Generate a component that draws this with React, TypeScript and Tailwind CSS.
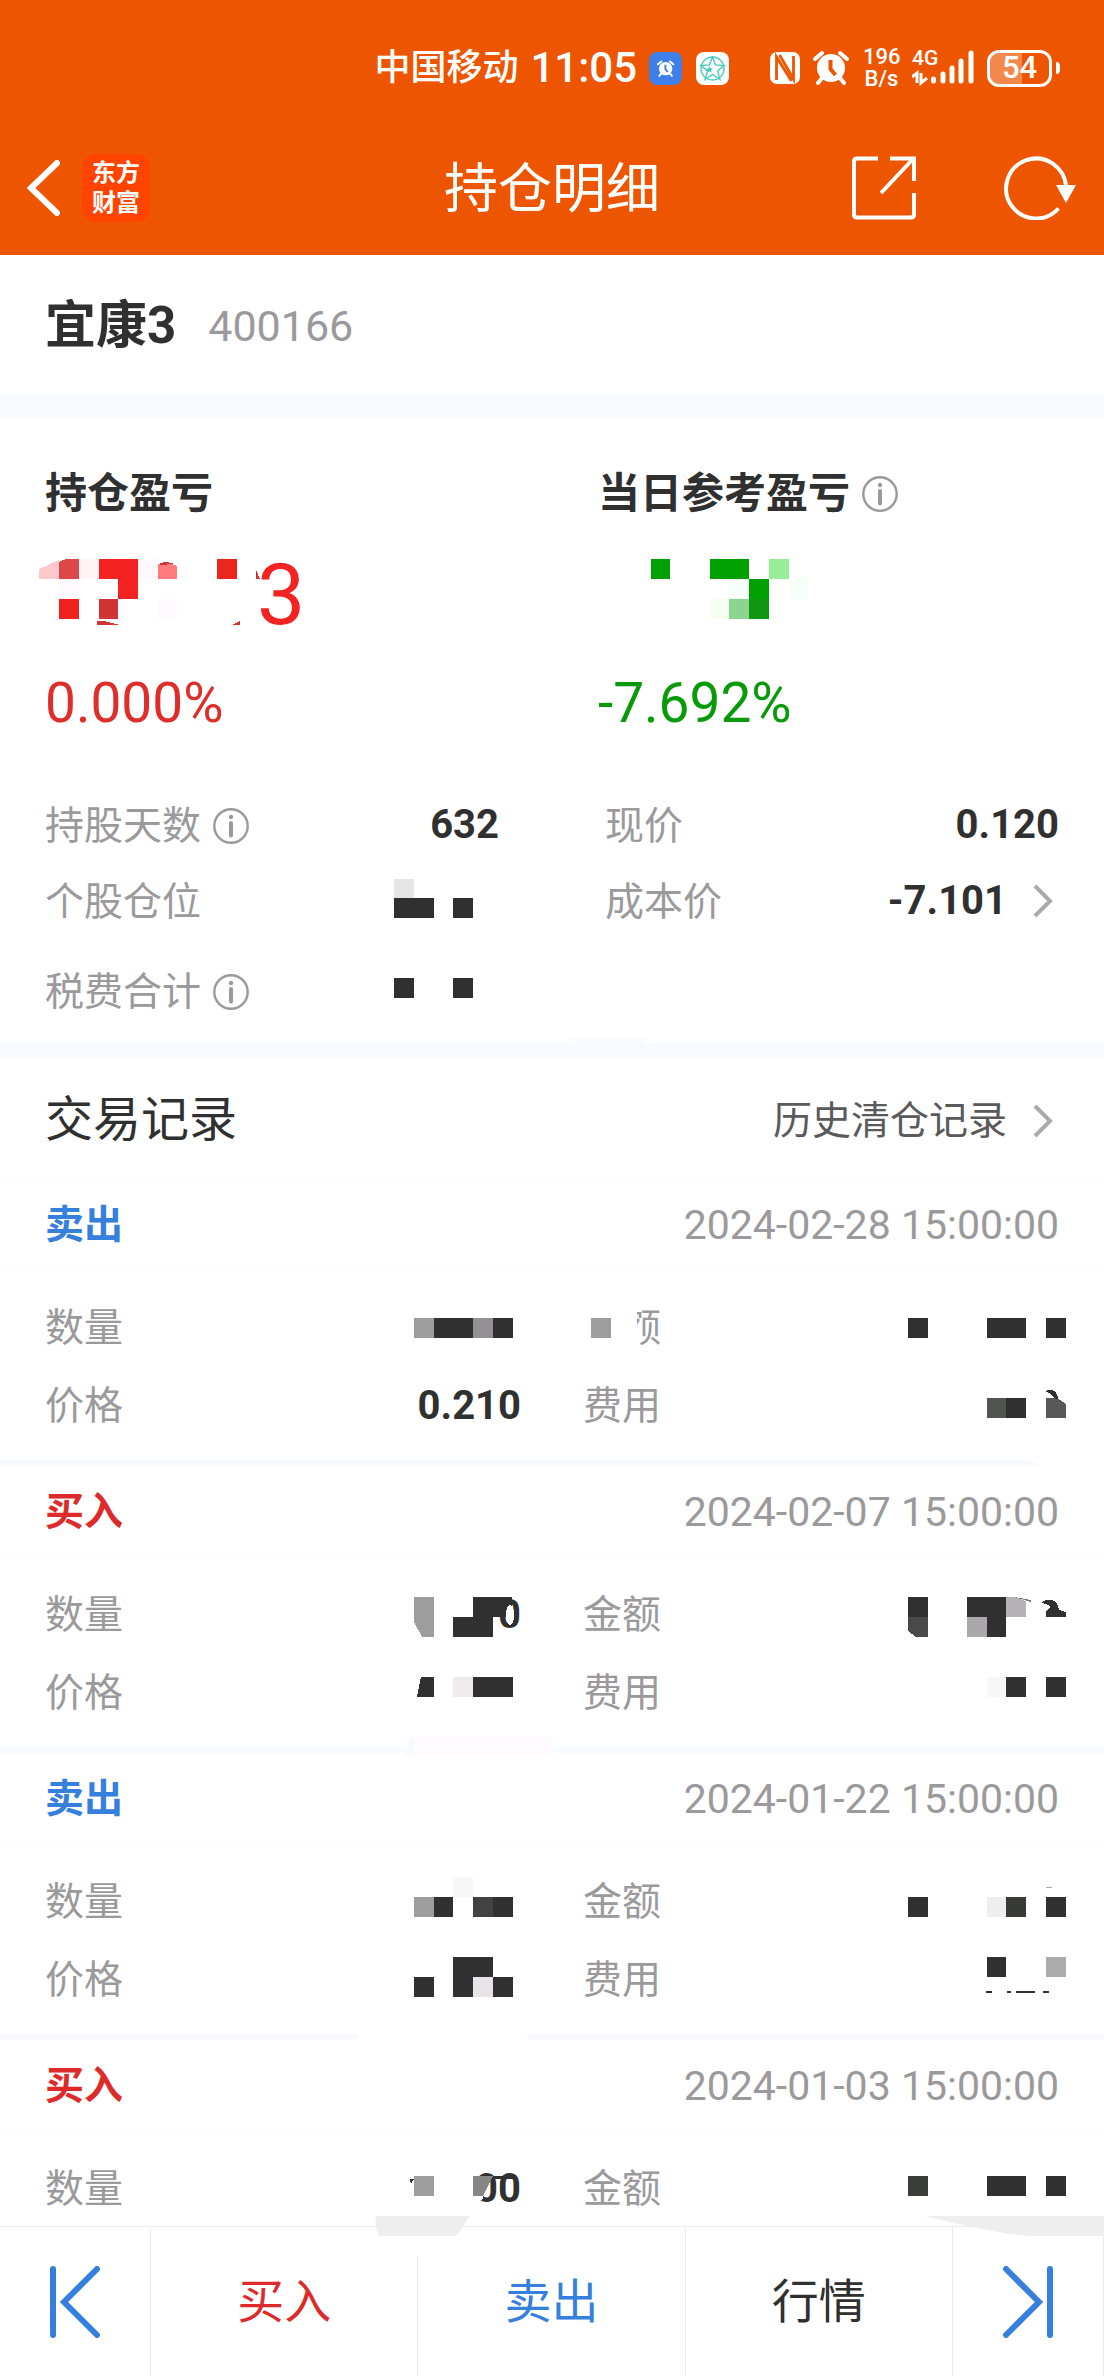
// src/pages/position/PositionDetail.tsx
import React from 'react';

// [x, y, largeur, hauteur, couleur]
type Cell = [number, number, number, number, string];

const DARK = '#303030';
const GREY = '#9c9d9c';

interface MosaicProps {
  cells?: Cell[];
  className?: string;
  children?: React.ReactNode;
}

// Mosaïque qui masque un montant
const Mosaic: React.FC<MosaicProps> = ({ cells = [], className = '', children }) => (
  <svg aria-hidden="true" shapeRendering="crispEdges" className={`overflow-visible ${className}`}>
    {cells.map(([x, y, w, h, color], i) => (
      <rect key={i} x={x} y={y} width={w} height={h} fill={color} />
    ))}
    {children}
  </svg>
);

const InfoIcon: React.FC = () => (
  <svg viewBox="0 0 36 36" className="h-9 w-9 shrink-0" fill="none" stroke="#9b999b" aria-hidden="true">
    <circle cx="18" cy="18" r="16.7" strokeWidth="2.4" />
    <circle cx="18" cy="9" r="2.2" fill="#9b999b" stroke="none" />
    <path d="M18 15v12.5" strokeWidth="4" strokeLinecap="round" />
  </svg>
);

const ChevronIcon: React.FC = () => (
  <svg viewBox="0 0 20 34" className="h-[34px] w-5 shrink-0" fill="none" stroke="#aaa9ac" strokeWidth="4" aria-hidden="true">
    <path d="M2 2l15 15L2 32" />
  </svg>
);

const AlarmShape: React.FC<{ hand: string }> = ({ hand }) => (
  <>
    <circle cx="18" cy="18" r="14" fill="#fff" />
    <path d="M2 9l7-6M34 9l-7-6M9 28l-4 5M27 28l4 5" stroke="#fff" strokeWidth="4" strokeLinecap="round" />
    <path d="M17.500 10v9l5 6" fill="none" stroke={hand} strokeWidth="4" />
  </>
);

const StatusBar: React.FC = () => (
  <div className="flex h-[136px] items-center justify-end pr-11 font-medium">
    <span className="text-[36px] leading-[48px]">中国移动</span>
    <span className="ml-3 text-[42px] leading-[48px]">11:05</span>
    <svg viewBox="0 0 33 33" className="ml-3 h-[33px] w-[33px]" aria-hidden="true">
      <rect width="33" height="33" rx="8" fill="#3f7fea" />
      <g transform="translate(8 8) scale(.48)">
        <AlarmShape hand="#3f7fea" />
      </g>
    </svg>
    <svg viewBox="0 0 33 33" className="ml-[14px] h-[33px] w-[33px]" fill="none" stroke="#3fc9bd" aria-hidden="true">
      <rect width="33" height="33" rx="8" fill="#fff" stroke="none" />
      <circle cx="16.500" cy="16.500" r="11.500" strokeWidth="1.300" />
      <path d="M16.500 5l3 8 8.500.5-6.500 5.500 2.500 8.500-7.500-5-7.500 5 2.500-8.500L5 13.500l8.500-.5z" strokeWidth="1.300" />
      <path d="M13.500 14l1 2.500h2.500l-2 1.700.8 2.500-2.300-1.500-2.300 1.500.8-2.500-2-1.700h2.500z" fill="#3fc9bd" stroke="none" />
    </svg>
    <svg viewBox="0 0 32 32" className="ml-10 h-8 w-8" fill="none" stroke="#ee5500" aria-hidden="true">
      <rect x="1" y="0" width="30" height="32" rx="7" fill="#fff" stroke="none" />
      <path d="M7.500 28V5l15 24M24.500 4v23L10.500 3" strokeWidth="2.800" />
    </svg>
    <svg viewBox="0 0 36 36" className="ml-3 h-9 w-9" aria-hidden="true">
      <AlarmShape hand="#ee5500" />
    </svg>
    <div className="ml-[14px] w-[37px] text-center text-[22px] leading-[22px]">
      <div>196</div>
      <div>B/s</div>
    </div>
    <div className="relative ml-3 h-9 w-[63px]">
      <span className="absolute -top-1 left-0 text-[21px] leading-[24px]">4G</span>
      <svg viewBox="0 0 63 36" className="h-9 w-[63px]" stroke="#fff" aria-hidden="true">
        <path d="M21.500 29v2M31 24v7M40 18v13M49 11v20M59 3v28" strokeWidth="5" strokeLinecap="round" />
        <path d="M0 27l5-4v10M9 23v10l6-5" fill="none" strokeWidth="3" />
      </svg>
    </div>
    <div className="relative ml-3 flex h-[37px] w-[65px] items-center justify-center overflow-hidden rounded-[12px] border-3 border-white">
      <div className="absolute inset-y-0 left-0 w-[54%] bg-white/30" />
      <span className="relative text-[31px] leading-[32px]">54</span>
    </div>
    <div className="ml-1 h-3 w-1 rounded-r-full bg-white" />
  </div>
);

const NavBar: React.FC = () => (
  <div className="grid h-[104px] grid-cols-[1fr_auto_1fr] items-center">
    <div className="flex items-center gap-[22px] pl-[26px]">
      <button type="button" aria-label="返回">
        <svg viewBox="0 0 34 56" className="h-14 w-[34px]" fill="none" stroke="#fff" strokeWidth="6">
          <path d="M31 3L5 28l26 25" strokeLinecap="round" />
        </svg>
      </button>
      <div className="flex h-[68px] w-[68px] items-center justify-center rounded-[14px] bg-[#ff4400] text-center text-[24px] leading-[30px] font-bold">
        东方
        <br />
        财富
      </div>
    </div>
    <h1 className="pt-1 text-[54px] leading-[64px]">持仓明细</h1>
    <div className="flex items-center justify-end gap-[88px] pr-[28px]">
      <button type="button" aria-label="分享">
        <svg viewBox="0 0 64 64" className="h-16 w-16" fill="none" stroke="#fff" strokeWidth="4">
          <path d="M26 2.500H5Q2 2.500 2 5.500v53q0 3 3 3h54q3 0 3-3V37" />
          <path d="M38 2.500h24V25M61 3L29 37" />
        </svg>
      </button>
      <button type="button" aria-label="刷新">
        <svg viewBox="0 0 72 64" className="h-16 w-[72px]" fill="none" stroke="#fff" strokeWidth="4">
          <path d="M54.500 52.500A30 30 0 1 1 62 30" />
          <path d="M52 29h20L62 47z" fill="#fff" stroke="none" />
        </svg>
      </button>
    </div>
  </div>
);

interface DetailRowProps {
  label: string;
  info?: boolean;
  children?: React.ReactNode;
}

const DetailRow: React.FC<DetailRowProps> = ({ label, info, children }) => (
  <div className="flex h-[76px] items-center justify-between">
    <dt className="flex items-center gap-3 pt-[2px] text-[39px] leading-[48px] text-[#9b999b]">
      {label}
      {info && <InfoIcon />}
    </dt>
    <dd className="flex h-full items-center text-[40px] leading-[50px] font-bold">{children}</dd>
  </div>
);

const PositionSummary: React.FC = () => (
  <section className="px-[45px] pt-[52px] pb-[14px]">
    <div className="-mx-[45px] grid grid-cols-2">
      <div className="pl-[45px]">
        <h2 className="text-[42px] leading-[48px] font-bold">持仓盈亏</h2>
        <div className="mt-[35px] flex h-[84px] items-center text-[86px] leading-[84px] text-[#f22321]">
          <Mosaic
            className="h-full w-[212px]"
            cells={[
              [34, 6, 20, 20, '#fff5f5'],
              [54, 6, 39, 20, '#f52223'],
              [73, 26, 20, 20, '#f52223'],
              [93, 6, 20, 20, '#fff9fe'],
              [14, 26, 20, 20, '#fffaff'],
              [14, 46, 20, 20, '#f0221e'],
              [54, 46, 19, 20, '#d03433'],
              [113, 46, 19, 20, '#fffaff'],
              [172, 6, 20, 20, '#ea261f'],
            ]}
          >
            <path d="M-6 16L14 7v19H-6z" fill="#fdc9cc" />
            <path d="M14 9l7-3h13v20H14z" fill="#dd4748" />
            <path d="M113 11q10-3 19 2v13h-19z" fill="#ff7b7d" />
            <path d="M115 10q8-2 14 1l-14 1z" fill="#d03433" />
            <path d="M52 68h7l16 4H52zM187 72l8-4v4zM211 17l4 9h-4z" fill="#d03433" />
          </Mosaic>
          3
        </div>
        <p className="mt-[34px] text-[55px] leading-[64px] text-[#df2d2a]">0.000%</p>
      </div>
      <div className="pl-[46px]">
        <h2 className="flex items-center gap-3 text-[42px] leading-[48px] font-bold">
          当日参考盈亏
          <InfoIcon />
        </h2>
        <div className="mt-[35px] h-[84px]">
          <Mosaic
            className="h-full w-[212px]"
            cells={[
              [53, 6, 19, 20, '#00a000'],
              [112, 6, 39, 20, '#00a000'],
              [171, 6, 20, 20, '#97ee99'],
              [131, 26, 20, 20, '#f7fffa'],
              [151, 26, 20, 20, '#00a000'],
              [191, 26, 19, 20, '#f6fffa'],
              [112, 46, 19, 20, '#f6ffef'],
              [131, 46, 20, 20, '#8bd58f'],
              [151, 46, 20, 20, '#109712'],
            ]}
          />
        </div>
        <p className="mt-[34px] text-[55px] leading-[64px] text-[#079b09]">-7.692%</p>
      </div>
    </div>

    <dl className="mt-[52px] grid grid-cols-2 gap-x-[106px]">
      <DetailRow label="持股天数" info>632</DetailRow>
      <DetailRow label="现价">0.120</DetailRow>
      <DetailRow label="个股仓位">
        <Mosaic
          className="h-full w-[160px]"
          cells={[
            [55, 16, 20, 19, '#e5e5e5'],
            [55, 35, 40, 20, DARK],
            [114, 35, 20, 20, DARK],
          ]}
        />
      </DetailRow>
      <DetailRow label="成本价">
        <button type="button" className="flex items-center gap-[26px] pr-[6px]">
          -7.101
          <ChevronIcon />
        </button>
      </DetailRow>
      <div className="mt-[14px]">
        <DetailRow label="税费合计" info>
          <Mosaic
            className="h-full w-[160px]"
            cells={[
              [55, 25, 20, 20, DARK],
              [114, 25, 20, 20, DARK],
            ]}
          />
        </DetailRow>
      </div>
    </dl>
  </section>
);

interface FieldProps {
  label: string;
  value?: string;
  labelMask?: React.ReactNode;
  mask?: React.ReactNode;
}

const Field: React.FC<FieldProps> = ({ label, value, labelMask, mask }) => (
  <div className="flex h-[78px] items-center justify-between">
    <dt className="relative flex h-full items-center pt-[2px] text-[39px] leading-[48px] text-[#9b999b]">
      {label}
      {labelMask}
    </dt>
    <dd className="relative flex h-full w-[160px] items-center justify-end pt-[2px] text-[40px] leading-[48px] font-bold">
      {value}
      {mask}
    </dd>
  </div>
);

// Masque posé par-dessus la valeur d'un champ
const Mask: React.FC<MosaicProps> = (props) => (
  <Mosaic {...props} className="absolute inset-0 h-full w-full" />
);

interface TradeRecord {
  side: 'buy' | 'sell';
  time: string;
  fields: FieldProps[];
  divider?: React.ReactNode;
}

const records: TradeRecord[] = [
  {
    side: 'sell',
    time: '2024-02-28 15:00:00',
    fields: [
      {
        label: '数量',
        mask: <Mask cells={[[53, 30, 20, 20, GREY], [73, 30, 39, 20, DARK], [112, 30, 20, 20, '#939193'], [132, 30, 20, 20, DARK]]} />,
      },
      {
        label: '金额',
        labelMask: (
          <Mask cells={[[0, 8, 54, 62, '#fff'], [8, 30, 20, 20, GREY]]}>
            <path d="M54 40h5l-3 20h-2z" fill="#fff" />
          </Mask>
        ),
        mask: <Mask cells={[[9, 30, 20, 20, DARK], [88, 30, 39, 20, DARK], [147, 30, 20, 20, DARK]]} />,
      },
      { label: '价格', value: '0.210' },
      {
        label: '费用',
        mask: (
          <Mask cells={[[88, 32, 19, 20, '#52544f'], [107, 32, 20, 20, DARK]]}>
            <path d="M147 32h11l9 6v14h-20z" fill="#585658" />
            <path d="M146 25q12-4 13 8l-4-1q-2-4-9-7z" fill={DARK} />
          </Mask>
        ),
      },
    ],
    divider: <path d="M1030 0l12 6h62V0z" fill="#fff" />,
  },
  {
    side: 'buy',
    time: '2024-02-07 15:00:00',
    fields: [
      {
        label: '数量',
        value: '0',
        mask: (
          <Mask cells={[[112, 22, 39, 20, DARK], [92, 42, 40, 20, DARK]]}>
            <path d="M53 22h20v40H61l-8-15z" fill={GREY} />
            <ellipse cx="149" cy="40" rx="4" ry="10" fill="#fff" />
          </Mask>
        ),
      },
      {
        label: '金额',
        mask: (
          <Mask cells={[[9, 22, 20, 20, DARK], [68, 22, 39, 20, DARK], [68, 42, 20, 20, '#aaa8aa'], [88, 42, 19, 20, DARK]]}>
            <path d="M9 42h20v20H17l-8-6z" fill="#494949" />
            <path d="M107 22h8l12 4v16h-20z" fill="#b4b2b4" />
            <path d="M115 22l17 3v2z" fill="#777" />
            <path d="M142 28q8-7 16 0l2 7 7 2v5h-20v-6l5-4q-5-4-10-4z" fill={DARK} />
          </Mask>
        ),
      },
      {
        label: '价格',
        mask: (
          <Mask cells={[[92, 24, 20, 20, '#eeeaee'], [112, 24, 40, 20, DARK]]}>
            <path d="M60 24h13v20H56z" fill={DARK} />
          </Mask>
        ),
      },
      {
        label: '费用',
        mask: <Mask cells={[[88, 24, 19, 20, '#f7f7f7'], [107, 24, 20, 20, DARK], [147, 24, 20, 20, DARK]]} />,
      },
    ],
    divider: (
      <>
        <path d="M409-10h5v20h-9z" fill="#f7faff" />
        <path d="M414-10h139v20H414z" fill="#fffbff" />
      </>
    ),
  },
  {
    side: 'sell',
    time: '2024-01-22 15:00:00',
    fields: [
      {
        label: '数量',
        mask: (
          <Mask
            cells={[
              [92, 15, 20, 20, '#f7f7f7'],
              [53, 35, 20, 20, GREY],
              [73, 35, 19, 20, DARK],
              [112, 35, 20, 20, '#434242'],
              [132, 35, 20, 20, DARK],
            ]}
          />
        ),
      },
      {
        label: '金额',
        mask: (
          <Mask
            cells={[
              [147, 25, 6, 1, '#aaa'],
              [9, 35, 20, 20, DARK],
              [88, 35, 19, 20, '#eeeeee'],
              [107, 35, 20, 20, '#383a36'],
              [147, 35, 20, 20, DARK],
            ]}
          />
        ),
      },
      {
        label: '价格',
        mask: (
          <Mask
            cells={[
              [92, 17, 40, 20, DARK],
              [53, 37, 20, 20, DARK],
              [92, 37, 20, 20, DARK],
              [112, 37, 20, 20, '#e8e3e7'],
              [132, 37, 20, 20, DARK],
            ]}
          />
        ),
      },
      {
        label: '费用',
        mask: (
          <Mask
            cells={[
              [88, 17, 19, 20, DARK],
              [147, 17, 20, 20, '#abaaac'],
              [87, 51, 6, 2, DARK],
              [108, 51, 4, 2, DARK],
              [117, 51, 19, 2, DARK],
              [144, 51, 6, 2, DARK],
            ]}
          />
        ),
      },
    ],
    divider: <path d="M359 0h168v6H359z" fill="#fff" />,
  },
  {
    side: 'buy',
    time: '2024-01-03 15:00:00',
    fields: [
      {
        label: '数量',
        value: '00',
        mask: (
          <Mask cells={[[53, 27, 20, 20, GREY], [132, 27, 20, 3, DARK]]}>
            <path d="M110 27h20l-9 24h-11z" fill="#fff" />
            <path d="M112 27h20l-10 20h-10z" fill="#858784" />
            <path d="M49 30h4l-3 5z" fill={DARK} />
          </Mask>
        ),
      },
      {
        label: '金额',
        mask: <Mask cells={[[9, 27, 20, 20, '#3b3d39'], [88, 27, 39, 20, DARK], [147, 27, 20, 20, DARK]]} />,
      },
    ],
  },
];

const RecordItem: React.FC<{ record: TradeRecord }> = ({ record }) => (
  <li>
    <div className="flex h-[91px] items-center justify-between border-b border-[#fcfcfc] px-[45px] pt-[2px]">
      <h3
        className={`text-[39px] leading-[48px] font-bold ${
          record.side === 'buy' ? 'text-[#dd2b2b]' : 'text-[#3580dc]'
        }`}
      >
        {record.side === 'buy' ? '买入' : '卖出'}
      </h3>
      <time className="text-[41px] leading-[48px] text-[#9b999b]">{record.time}</time>
    </div>
    <dl className="grid grid-cols-2 gap-x-[62px] px-[45px] pt-[18px] pb-4">
      {record.fields.map((field) => (
        <Field key={field.label} {...field} />
      ))}
    </dl>
    {record.divider && (
      <div className="h-[6px] bg-[#f7faff]">
        <Mosaic className="h-full w-full">{record.divider}</Mosaic>
      </div>
    )}
  </li>
);

const TradeHistory: React.FC = () => (
  <section>
    <div className="flex h-[121px] items-center justify-between border-b border-[#fcfcfc] pt-[3px] pr-[51px] pl-[45px]">
      <h2 className="text-[48px] leading-[56px]">交易记录</h2>
      <a href="#history" className="flex items-center gap-[26px] pt-[2px] text-[39px] leading-[48px] text-[#5a5a5a]">
        历史清仓记录
        <ChevronIcon />
      </a>
    </div>
    <ul>
      {records.map((record) => (
        <RecordItem key={record.time} record={record} />
      ))}
    </ul>
  </section>
);

const BottomBar: React.FC = () => (
  <nav className="relative flex h-[150px] shrink-0 divide-x divide-[#ececec] border-t border-[#ececec] bg-white text-[47px] leading-[56px]">
    <button type="button" aria-label="上一只" className="flex w-[151px] items-center justify-center">
      <svg viewBox="0 0 52 72" className="h-[72px] w-[52px]" fill="none" stroke="#3580dc" strokeWidth="6" strokeLinecap="round">
        <path d="M4 3v66M48 3L15 36l33 33" />
      </svg>
    </button>
    <button type="button" className="flex-1 text-[#dd2b2b]">买入</button>
    <button type="button" className="flex-1 text-[#3580dc]">卖出</button>
    <button type="button" className="flex-1">行情</button>
    <button type="button" aria-label="下一只" className="flex w-[151px] items-center justify-center">
      <svg viewBox="0 0 52 72" className="h-[72px] w-[52px]" fill="none" stroke="#3580dc" strokeWidth="6" strokeLinecap="round">
        <path d="M48 3v66M4 3l33 33L4 69" />
      </svg>
    </button>
    <svg aria-hidden="true" className="pointer-events-none absolute inset-0 h-full w-full overflow-visible">
      <path d="M376-11h94l-14 20h-77q-5-10-3-20z" fill="#eeeeee" />
      <path d="M925-11h179V9h-72q-30-1-107-20z" fill="#eeeeee" />
      <path d="M414 9h6v20h-6z" fill="#fff" />
    </svg>
  </nav>
);

const App: React.FC = () => {
  return (
    <div className="flex h-screen flex-col bg-white font-['Roboto','Noto_Sans_CJK_SC',sans-serif] text-[#303030]">
      {/* En-tête */}
      <header className="h-[255px] shrink-0 bg-[#ee5500] text-white">
        <StatusBar />
        <NavBar />
      </header>

      {/* Contenu principal */}
      <main className="min-h-0 flex-1 overflow-hidden">
        <div className="flex h-[140px] items-center gap-8 px-[45px] pt-[2px]">
          <h2 className="text-[51px] leading-[60px] font-bold">宜康3</h2>
          <span className="text-[43px] leading-[48px] text-[#9b999b]">400166</span>
        </div>
        <div className="h-[23px] bg-[#f7faff]" />
        <PositionSummary />
        <div className="h-[15px] bg-[#f7faff]">
          <Mosaic className="h-full w-full">
            <path d="M567-5h79l-2 5h-65z" fill="#f7faff" />
          </Mosaic>
        </div>
        <TradeHistory />
      </main>

      <BottomBar />
    </div>
  );
};

export default App;
